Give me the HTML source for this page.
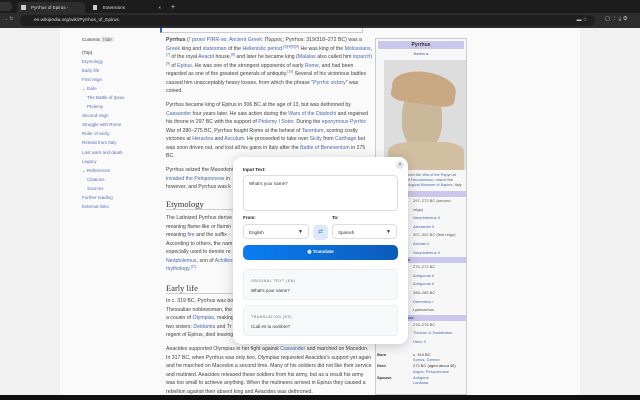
<!DOCTYPE html>
<html><head><meta charset="utf-8"><style>
*{margin:0;padding:0;box-sizing:border-box}
body{width:640px;height:400px;overflow:hidden;background:#f3f3f3;font-family:"Liberation Sans",sans-serif;position:relative}
.tabs{position:absolute;left:0;top:0;width:640px;height:13px;background:#1c1c1c}
.tab{position:absolute;top:2px;height:11px;border-radius:4px 4px 0 0;font-size:4.5px;color:#ddd;line-height:11px;padding-left:14px}
.addr{position:absolute;left:0;top:13px;width:640px;height:15px;background:#2d2d2d}
.omni{position:absolute;left:20px;top:2px;width:575px;height:11px;border-radius:6px;background:#1f1f1f;color:#ddd;font-size:4.8px;line-height:11px;padding-left:14px}
.page{position:absolute;left:0;top:28px;width:640px;height:367px;background:#f1f1f1}
.main{position:absolute;left:60px;top:28px;width:520px;height:367px;background:#fafafa}
.bot{position:absolute;left:0;top:395px;width:640px;height:5px;background:#111}
.t{position:absolute;font-size:5.2px;color:#444;line-height:8.5px}
.t sup{font-size:3.5px;line-height:0;color:#4a67b0}
.l{color:#4a67b0}
.toc div{font-size:4.5px;color:#5a72b8;height:9.06px;line-height:9px}
h2{position:absolute;font-family:"Liberation Serif",serif;font-weight:normal;font-size:8.5px;color:#333;border-bottom:0.5px solid #ccc;width:205px}
.ib{position:absolute;left:375px;top:38px;width:92px;height:357px;background:#f7f7f7;border:0.5px solid #ccc;overflow:hidden}
.ibh{background:#cbc6ec;font-size:5px;font-weight:bold;text-align:center;color:#333;height:8px;line-height:8px;margin:2px}
.sec{background:#cbc6ec;font-size:4px;font-weight:bold;color:#3a55a0;height:6px;line-height:6px;padding-left:2px}
.rows{font-size:4px;color:#555;padding-left:37px;line-height:8.6px;padding-right:6px}
.pop{position:absolute;left:233px;top:157px;width:175px;height:187px;background:#fff;border-radius:9px;box-shadow:0 2px 12px rgba(0,0,0,.2)}
.lab{position:absolute;font-size:4.5px;color:#222;font-weight:bold}
.box{position:absolute;border:0.6px solid #ddd;border-radius:4px;background:#fff;font-size:4.5px;color:#333}
</style></head><body>
<div class="tabs">
<div style="position:absolute;left:0;top:2px;width:12px;height:9px;background:#333;border-radius:0 4px 4px 0"></div>
<div class="tab" style="left:17px;width:68px;background:#2d2d2d">Pyrrhus of Epirus - Wikipedia<span style="position:absolute;right:4px">×</span><span style="position:absolute;left:4px;top:3px;width:5px;height:5px;background:#ccc"></span></div>
<div class="tab" style="left:89px;width:80px">Extensions<span style="position:absolute;right:8px">×</span><span style="position:absolute;left:4px;top:3px;width:4px;height:5px;background:#ccc"></span></div>
<div class="tab" style="left:171px;padding-left:0;font-size:7px">+</div>
</div>
<div class="addr"><span style="position:absolute;left:3px;top:3px;font-size:5px;color:#aaa">→ ↻</span>
<div class="omni">en.wikipedia.org/wiki/Pyrrhus_of_Epirus<span style="position:absolute;right:8px;color:#ccc">▬ ☆</span></div>
<span style="position:absolute;left:605px;top:3px;font-size:5.5px;color:#ccc">▢ ⋮ ⤓ ⚙</span></div>
<div class="page"></div>
<div class="main"></div>
<div style="position:absolute;left:160px;top:28px;width:203px;height:5px;border:0.5px solid #ccc;border-top:none;border-left:2px solid #36c;background:#fafafa"></div>
<div class="t" style="left:82px;top:36px;font-size:4.5px;color:#333">Contents <span style="background:#e6e6e6;padding:0 2px;color:#666">hide</span></div>
<div class="toc" style="position:absolute;left:82px;top:48px">
<div style="color:#333">(Top)</div><div>Etymology</div><div>Early life</div><div>First reign</div><div>⌄ Exile</div><div style="padding-left:5px">The Battle of Ipsus</div><div style="padding-left:5px">Ptolemy</div><div>Second reign</div><div>Struggle with Rome</div><div>Ruler of Sicily</div><div>Retreat from Italy</div><div>Last wars and death</div><div>Legacy</div><div>⌄ References</div><div style="padding-left:5px">Citations</div><div style="padding-left:5px">Sources</div><div>Further reading</div><div>External links</div></div>
<div class="t" style="left:166px;top:36px;width:206px"><b>Pyrrhus</b> (<span class="l">/ˈpɪrəs/ PIRR-əs; Ancient Greek</span>: Πύρρος; Pyrrhos: 319/318–272 BC) was a <span class="l">Greek</span> king and <span class="l">statesman</span> of the <span class="l">Hellenistic period</span>.<sup>[3][4][5][6]</sup> He was king of the <span class="l">Molossians</span>,<sup>[7]</sup> of the royal <span class="l">Aeacid</span> house,<sup>[8]</sup> and later he became king (<span class="l">Malalas</span> also called him <span class="l">toparch</span>)<sup>[9]</sup> of <span class="l">Epirus</span>. He was one of the strongest opponents of early <span class="l">Rome</span>, and had been regarded as one of the greatest generals of antiquity.<sup>[10]</sup> Several of his victorious battles caused him unacceptably heavy losses, from which the phrase "<span class="l">Pyrrhic victory</span>" was coined.</div>
<div class="t" style="left:166px;top:101px;width:206px">Pyrrhus became king of Epirus in 306 BC at the age of 13, but was dethroned by <span class="l">Cassander</span> four years later. He saw action during the <span class="l">Wars of the Diadochi</span> and regained his throne in 297 BC with the support of <span class="l">Ptolemy I Soter</span>. During the <span class="l">eponymous Pyrrhic</span> War of 280–275 BC, Pyrrhus fought Rome at the behest of <span class="l">Tarentum</span>, scoring costly victories at <span class="l">Heraclea</span> and <span class="l">Asculum</span>. He proceeded to take over <span class="l">Sicily</span> from <span class="l">Carthage</span> but was soon driven out, and lost all his gains in Italy after the <span class="l">Battle of Beneventum</span> in 275 BC.</div>
<div class="t" style="left:166px;top:166px;width:206px">Pyrrhus seized the Macedonian throne<br><span class="l">invaded the Peloponnese</span> in<br>however, and Pyrrhus was k</div>
<h2 style="left:166px;top:199px">Etymology</h2>
<div class="t" style="left:166px;top:214px;width:206px">The Latinized Pyrrhus derive<br>meaning flame-like or flamin<br>meaning <span class="l">fire</span> and the suffix -<br>According to others, the nam<br>especially used to denote re<br><span class="l">Neoptolemus</span>, son of <span class="l">Achilles</span><br><span class="l">mythology</span>.<sup>[11]</sup></div>
<h2 style="left:166px;top:283px">Early life</h2>
<div class="t" style="left:166px;top:297px;width:206px">In c. 319 BC, Pyrrhus was bo<br>Thessalian noblewoman, the<br>a cousin of <span class="l">Olympias</span>, making<br>two sisters: <span class="l">Deidamia</span> and Tr<br>regent of Epirus, died leaving</div>
<div class="t" style="left:166px;top:345px;width:206px">Aeacides supported Olympias in her fight against <span class="l">Cassander</span> and marched on Macedon. In 317 BC, when Pyrrhus was only two, Olympias requested Aeacides's support yet again and he marched on Macedon a second time. Many of his soldiers did not like their service and mutinied. Aeacides released these soldiers from his army, but as a result his army was too small to achieve anything. When the mutineers arrived in Epirus they caused a rebellion against their absent king and Aeacides was dethroned.</div>
<div class="ib">
<div class="ibh">Pyrrhus</div>
<div style="font-size:4px;color:#4a67b0;text-align:center">Basileus</div>
<div style="margin:4px 0 0 8px;width:82px;height:110px;background:#ddd;position:relative;overflow:hidden">
<div style="position:absolute;left:18px;top:28px;width:40px;height:60px;background:#cbb79a;border-radius:45% 45% 40% 40%"></div>
<div style="position:absolute;left:8px;top:12px;width:64px;height:32px;background:#c9a884;border-radius:50% 50% 20% 20%;transform:rotate(8deg)"></div>
<div style="position:absolute;left:4px;top:82px;width:76px;height:30px;background:#d2bfa2;border-radius:30% 30% 0 0"></div>
</div>
<div style="font-size:3.8px;color:#555;padding:3px 4px;line-height:5px">Bust of Pyrrhus from the <span class="l">Villa of the Papyri</span> at the Roman site of <span class="l">Herculaneum</span>, now in the <span class="l">National Archaeological Museum of Naples</span>, Italy</div>
<div class="sec">King of Epirus</div>
<div class="rows">297–272 BC (second reign)<br><span class="l">Neoptolemus II</span><br><span class="l">Alexander II</span><br>307–302 BC (first reign)<br><span class="l">Alcetas II</span><br><span class="l">Neoptolemus II</span></div>
<div class="sec">King of Macedon</div>
<div class="rows">274–272 BC<br><span class="l">Antigonus II</span><br><span class="l">Antigonus II</span><br>288–285 BC<br><span class="l">Demetrius I</span><br>Lysimachus</div>
<div class="sec">Tyrant of Syracuse</div>
<div class="rows">278–276 BC<br><span class="l">Thoinon &amp; Sosistratus</span><br><span class="l">Hiero II</span></div>
<div style="font-size:4px;color:#333;padding:5px 0 0 1px;line-height:5.8px"><b style="display:inline-block;width:36px">Born</b>c. 319 BC<br><span style="display:inline-block;width:36px"></span><span class="l">Epirus, Greece</span><br><b style="display:inline-block;width:36px">Died</b>272 BC (aged about 46)<br><span style="display:inline-block;width:36px"></span><span class="l">Argos, Peloponnese</span><br><b style="display:inline-block;width:36px">Spouse</b><span class="l">Antigone</span><br><span style="display:inline-block;width:36px"></span><span class="l">Lanassa</span></div>
</div>
<div class="bot"></div>

<div class="pop">
<div style="position:absolute;right:4px;top:4px;width:8px;height:8px;border-radius:50%;background:#e4e6ea;font-size:5px;line-height:8px;text-align:center;color:#555">×</div>
<div class="lab" style="left:10px;top:10px">Input Text:</div>
<div class="box" style="left:10px;top:18px;width:155px;height:36px;padding:5px 5px">What's your name?</div>
<div class="lab" style="left:10px;top:58px">From:</div>
<div class="lab" style="left:99px;top:58px">To:</div>
<div class="box" style="left:10px;top:67px;width:66px;height:15px;padding:0 5px;line-height:15px">English<span style="position:absolute;right:5px;font-size:5px">▼</span></div>
<div style="position:absolute;left:80px;top:68px;width:15px;height:15px;border-radius:4px;background:#dde9fb;color:#4a78c8;font-size:6px;text-align:center;line-height:15px">⇄</div>
<div class="box" style="left:99px;top:67px;width:65px;height:15px;padding:0 5px;line-height:15px">Spanish<span style="position:absolute;right:5px;font-size:5px">▼</span></div>
<div style="position:absolute;left:10px;top:88px;width:155px;height:15px;border-radius:5px;background:linear-gradient(90deg,#0a7df2,#0b5cba);color:#fff;font-size:4.8px;font-weight:bold;text-align:center;line-height:15px">◉ Translate</div>
<div class="box" style="left:10px;top:112px;width:155px;height:31px;background:#f8f9fa;border-color:#eee;padding:6px 7px;line-height:10px"><div style="font-size:3.6px;color:#666;letter-spacing:.5px">ORIGINAL TEXT (EN)</div>What's your name?</div>
<div class="box" style="left:10px;top:148px;width:155px;height:31px;background:#f8f9fa;border-color:#eee;padding:6px 7px;line-height:10px"><div style="font-size:3.6px;color:#666;letter-spacing:.5px">TRANSLATION (ES)</div>Cuál es tu nombre?</div>
</div>
</body></html>
